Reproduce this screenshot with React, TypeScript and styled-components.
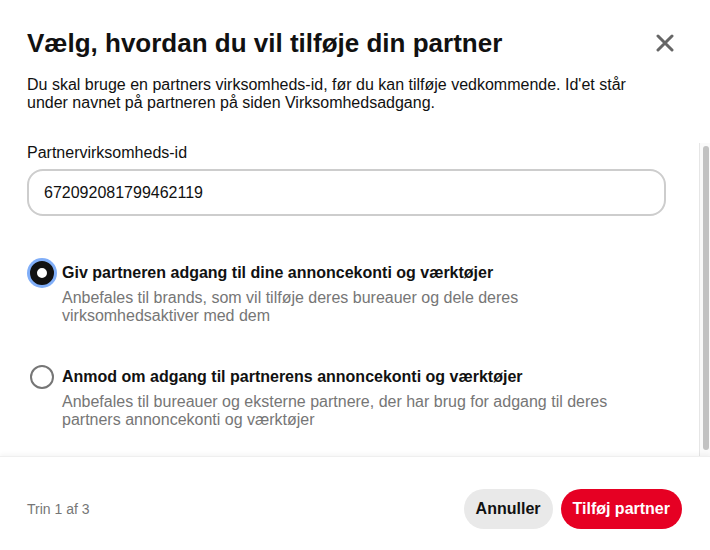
import React from "react";
import styled, { createGlobalStyle } from "styled-components";

const Global = createGlobalStyle`
  html, body { margin: 0; padding: 0; background: #fff; }
  body {
    font-family: "Liberation Sans", Arial, sans-serif;
    color: #111;
    -webkit-font-smoothing: antialiased;
  }
  * { box-sizing: border-box; }
`;

const Dialog = styled.div`
  width: 710px;
  height: 550px;
  display: flex;
  flex-direction: column;
  background: #fff;
  overflow: hidden;
`;

const Header = styled.div`
  padding: 25px 25px 30px 27px;
  display: flex;
  flex-direction: column;
  gap: 15px;
`;

const TitleRow = styled.div`
  display: flex;
  align-items: center;
  justify-content: space-between;
  height: 36px;
`;

const Title = styled.h1`
  margin: 0;
  font-size: 26px;
  line-height: 36px;
  font-weight: 700;
  color: #111;
`;

const CloseButton = styled.button`
  width: 40px;
  height: 40px;
  margin: -2px 0;
  border: none;
  background: transparent;
  border-radius: 50%;
  display: flex;
  align-items: center;
  justify-content: center;
  padding: 0;
  cursor: pointer;
`;

const Description = styled.p`
  margin: 0;
  font-size: 16px;
  line-height: 18px;
  color: #111;
  padding-right: 40px;
`;

const ScrollBody = styled.div`
  height: 314px;
  flex: none;
  display: flex;
`;

const ScrollContent = styled.div`
  flex: 1;
  overflow-y: auto;
  scrollbar-width: none;
  padding: 0 33px 44px 27px;
  &::-webkit-scrollbar { display: none; }
`;

const ScrollTrack = styled.div`
  width: 11px;
  flex: none;
  margin-top: 1px;
  background: #fafafa;
  border-left: 1px solid #e6e6e6;
  padding: 3px 1px 6px 3px;
  display: flex;
`;

const ScrollThumb = styled.div`
  flex: 1;
  background: #c2c2c2;
  border-radius: 8px;
`;

const Field = styled.div`
  display: flex;
  flex-direction: column;
  gap: 5px;
`;

const Label = styled.label`
  font-size: 16px;
  line-height: 22px;
  color: #111;
`;

const TextInput = styled.input`
  height: 47px;
  width: 100%;
  border: 2px solid #cdcdcd;
  border-radius: 16px;
  padding: 0 15px;
  font-family: inherit;
  font-size: 16px;
  color: #111;
  outline: none;
`;

const Options = styled.div`
  margin-top: 45px;
  display: flex;
  flex-direction: column;
  gap: 40px;
`;

const Option = styled.label`
  display: flex;
  align-items: flex-start;
  gap: 8px;
  padding-left: 3px;
  cursor: pointer;
`;

const Radio = styled.span<{ $checked?: boolean }>`
  flex: none;
  width: 24px;
  height: 24px;
  border-radius: 50%;
  background: #fff;
  border: ${(p) => (p.$checked ? "7px solid #111" : "2px solid #767676")};
  box-shadow: ${(p) => (p.$checked ? "0 0 0 3px #80aef8" : "none")};
`;

const OptionText = styled.div`
  display: flex;
  flex-direction: column;
  gap: 4px;
`;

const OptionTitle = styled.span`
  font-size: 16px;
  line-height: 24px;
  font-weight: 700;
  color: #111;
`;

const OptionHint = styled.span`
  font-size: 16px;
  line-height: 18px;
  color: #767676;
  padding-right: 10px;
`;

const Footer = styled.div`
  flex: 1;
  border-top: 1px solid #efefef;
  box-shadow: 0 -2px 4px rgba(0, 0, 0, 0.04);
  padding: 32px 28px 0 27px;
  display: flex;
  align-items: flex-start;
  justify-content: space-between;
  position: relative;
`;

const Step = styled.span`
  font-size: 14px;
  line-height: 40px;
  color: #767676;
`;

const Actions = styled.div`
  display: flex;
  gap: 8px;
`;

const Button = styled.button<{ $primary?: boolean }>`
  height: 40px;
  padding: 0 12px;
  border: none;
  border-radius: 20px;
  font-family: inherit;
  font-size: 16px;
  font-weight: 700;
  background: ${(p) => (p.$primary ? "#e60023" : "#e9e9e9")};
  color: ${(p) => (p.$primary ? "#fff" : "#111")};
  cursor: pointer;
`;

export default function App() {
  return (
    <>
      <Global />
      <Dialog>
        <Header>
          <TitleRow>
            <Title>Vælg, hvordan du vil tilføje din partner</Title>
            <CloseButton aria-label="Luk">
              <svg width="18" height="18" viewBox="0 0 18 18">
                <path
                  d="M2 2 L16 16 M16 2 L2 16"
                  stroke="#666"
                  strokeWidth="3"
                  strokeLinecap="round"
                />
              </svg>
            </CloseButton>
          </TitleRow>
          <Description>
            Du skal bruge en partners virksomheds-id, før du kan tilføje vedkommende. Id'et står
            under navnet på partneren på siden Virksomhedsadgang.
          </Description>
        </Header>
        <ScrollBody>
          <ScrollContent>
            <Field>
              <Label>Partnervirksomheds-id</Label>
              <TextInput defaultValue="672092081799462119" />
            </Field>
            <Options>
              <Option>
                <Radio $checked />
                <OptionText>
                  <OptionTitle>Giv partneren adgang til dine annoncekonti og værktøjer</OptionTitle>
                  <OptionHint>
                    Anbefales til brands, som vil tilføje deres bureauer og dele deres
                    virksomhedsaktiver med dem
                  </OptionHint>
                </OptionText>
              </Option>
              <Option>
                <Radio />
                <OptionText>
                  <OptionTitle>Anmod om adgang til partnerens annoncekonti og værktøjer</OptionTitle>
                  <OptionHint>
                    Anbefales til bureauer og eksterne partnere, der har brug for adgang til deres
                    partners annoncekonti og værktøjer
                  </OptionHint>
                </OptionText>
              </Option>
            </Options>
          </ScrollContent>
          <ScrollTrack>
            <ScrollThumb />
          </ScrollTrack>
        </ScrollBody>
        <Footer>
          <Step>Trin 1 af 3</Step>
          <Actions>
            <Button>Annuller</Button>
            <Button $primary>Tilføj partner</Button>
          </Actions>
        </Footer>
      </Dialog>
    </>
  );
}
